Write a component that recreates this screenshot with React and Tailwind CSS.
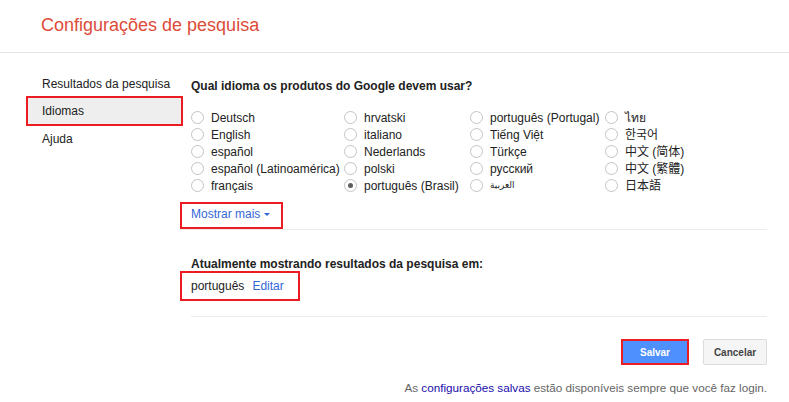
import React from 'react';

const columns = [
  ['Deutsch', 'English', 'español', 'español (Latinoamérica)', 'français'],
  ['hrvatski', 'italiano', 'Nederlands', 'polski', 'português (Brasil)'],
  ['português (Portugal)', 'Tiếng Việt', 'Türkçe', 'русский', 'العربية'],
  ['ไทย', '한국어', '中文 (简体)', '中文 (繁體)', '日本語'],
];

const colWidths = ['w-[153px]', 'w-[126px]', 'w-[135px]', 'w-[150px]'];

const Radio = ({ checked }) => (
  <span className="w-[13px] h-[13px] rounded-full border border-[#c4c4c4] bg-white flex items-center justify-center shrink-0">
    {checked && <span className="w-[5px] h-[5px] rounded-full bg-[#5f5f5f]" />}
  </span>
);

const App = () => {
  return (
    <div
      className="w-[789px] h-[402px] bg-white text-[12px] text-[#222] overflow-hidden"
      style={{ fontFamily: '"Liberation Sans", Arial, "Noto Sans CJK SC", "DejaVu Sans", sans-serif' }}
    >
      {/* Header */}
      <div className="h-[53px] border-b border-[#e5e5e5] flex items-center pl-[41px] pb-[3px]">
        <h1 className="text-[18px] text-[#dd4b39] leading-none">Configurações de pesquisa</h1>
      </div>

      <div className="flex">
        {/* Side nav */}
        <div className="w-[154px] ml-[26px] pt-[18px]">
          <div className="h-[25px] flex items-center pl-[16px] whitespace-nowrap">Resultados da pesquisa</div>
          <div className="h-[30px] flex items-center pl-[14px] bg-[#eeeeee] border-2 border-[#ec1c24] w-[157px]">Idiomas</div>
          <div className="h-[26px] flex items-center pl-[16px]">Ajuda</div>
        </div>

        {/* Main */}
        <div className="w-[587px] pt-[25px]">
          <div className="h-[16px] leading-[16px] pl-[11px] font-bold">Qual idioma os produtos do Google devem usar?</div>

          <div className="flex pl-[11px] mt-[15px]">
            {columns.map((col, ci) => (
              <div key={ci} className={colWidths[ci]}>
                {col.map((lang) => (
                  <div key={lang} className="h-[17px] flex items-center gap-[7px] whitespace-nowrap">
                    <Radio checked={lang === 'português (Brasil)'} />
                    <span className={lang === 'العربية' ? 'text-[9px]' : ''}>{lang}</span>
                  </div>
                ))}
              </div>
            ))}
          </div>

          <div className="mt-[8px] h-[27px] w-[103px] border-2 border-[#ec1c24] flex items-center pl-[9px] pb-[3px] text-[#3367d6]">
            Mostrar mais
            <span className="ml-[4px] w-0 h-0 border-l-[3px] border-r-[3px] border-t-[3px] border-l-transparent border-r-transparent border-t-[#3367d6]" />
          </div>
          <div className="h-px bg-[#ebebeb]" />

          <div className="mt-[26px] h-[15px] leading-[16px] pl-[11px] font-bold">Atualmente mostrando resultados da pesquisa em:</div>
          <div className="h-[30px] w-[120px] border-2 border-[#ec1c24] flex items-center pl-[9px] gap-[8px]">
            <span>português</span>
            <span className="text-[#3367d6]">Editar</span>
          </div>

          <div className="mt-[15px] ml-[11px] h-px bg-[#ebebeb]" />

          <div className="mt-[22px] flex justify-end gap-[14px]">
            <div className="h-[26px] w-[68px] border-2 border-[#ec1c24] bg-[#4d90fe] flex items-center justify-center text-white text-[10px] font-bold">
              Salvar
            </div>
            <div className="h-[26px] w-[64px] border border-[#dcdcdc] bg-[#f5f5f5] rounded-[2px] flex items-center justify-center text-[#444] text-[10px] font-bold">
              Cancelar
            </div>
          </div>

          <div className="mt-[14px] text-right text-[11.7px] text-[#666]">
            As <span className="text-[#1a0dab]">configurações salvas</span> estão disponíveis sempre que você faz login.
          </div>
        </div>
      </div>
    </div>
  );
};

export default App;
